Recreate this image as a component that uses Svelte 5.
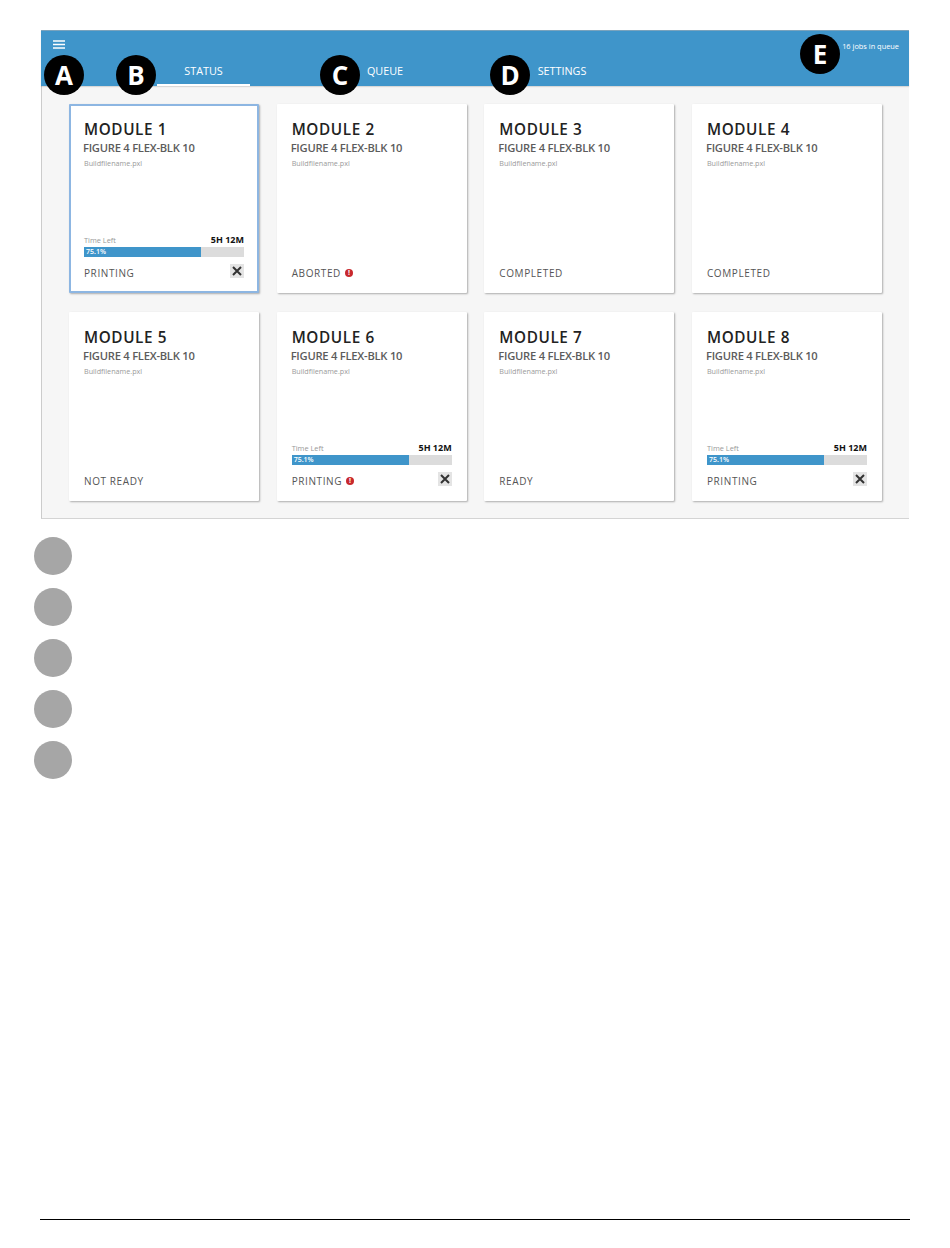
<script>
  const modules = [
    { n: 1, status: 'PRINTING', progress: true, active: true },
    { n: 2, status: 'ABORTED', alert: true },
    { n: 3, status: 'COMPLETED' },
    { n: 4, status: 'COMPLETED' },
    { n: 5, status: 'NOT READY' },
    { n: 6, status: 'PRINTING', progress: true, alert: true },
    { n: 7, status: 'READY' },
    { n: 8, status: 'PRINTING', progress: true }
  ];
  const tabs = ['STATUS', 'QUEUE', 'SETTINGS'];
  const markers = [
    { l: 'A', x: 64, y: 75 },
    { l: 'B', x: 136, y: 75 },
    { l: 'C', x: 340, y: 75 },
    { l: 'D', x: 510, y: 75 },
    { l: 'E', x: 820, y: 54 }
  ];
</script>

<div class="page">
  <section class="screen">
    <header class="bar">
      <div class="top">
        <svg class="menu" width="12" height="9" viewBox="0 0 12 9" aria-label="Menu">
          <path d="M0 1h12M0 4.5h12M0 8h12" stroke="#fff" stroke-width="1.7" fill="none" />
        </svg>
        <span class="jobs">16 jobs in queue</span>
      </div>
      <nav class="tabs">
        {#each tabs as t, i}
          <div class="tabcell"><span class="tab" class:on={i === 0}>{t}</span></div>
        {/each}
      </nav>
    </header>
    <div class="grid">
      {#each modules as m}
        <article class="card" class:active={m.active}>
          <h2>MODULE {m.n}</h2>
          <p class="sub">FIGURE 4 FLEX-BLK 10</p>
          <p class="file">Buildfilename.pxl</p>
          <div class="bottom">
            {#if m.progress}
              <div class="time"><span class="tl">Time Left</span><strong>5H 12M</strong></div>
              <div class="track"><div class="fill">75.1%</div></div>
            {/if}
            <div class="foot">
              <span class="status">{m.status}</span>
              {#if m.alert}<span class="err">!</span>{/if}
              {#if m.progress}
                <span class="x">
                  <svg width="10" height="10" viewBox="0 0 10 10"><path d="M1 1l8 8M9 1l-8 8" stroke="#333" stroke-width="2" fill="none" /></svg>
                </span>
              {/if}
            </div>
          </div>
        </article>
      {/each}
    </div>
  </section>

  <ul class="legend">
    {#each markers as m}<li></li>{/each}
  </ul>

  <div class="rule"></div>

  {#each markers as m}
    <span class="marker" style="left:{m.x - 20}px;top:{m.y - 20}px">{m.l}</span>
  {/each}
</div>

<style>
  :global(body) { margin: 0; background: #fff; }
  .page {
    position: relative;
    box-sizing: border-box;
    min-height: 1248px;
    padding: 30px 40px 28px 41px;
    display: flex;
    flex-direction: column;
    font-family: "Open Sans", "Liberation Sans", sans-serif;
  }
  .screen {
    box-sizing: border-box;
    width: 868px;
    height: 489px;
    background: #f6f6f6;
    border-left: 1px solid #ccc;
    border-bottom: 1px solid #d4d4d4;
  }
  .bar {
    box-sizing: border-box;
    height: 56px;
    margin-left: -1px;
    background: #3f95ca;
    border-top: 1px solid #7aa3bd;
    box-shadow: 0 1px 1px rgba(0, 0, 0, 0.12);
  }
  .top {
    display: flex;
    justify-content: space-between;
    align-items: flex-start;
    height: 27px;
    padding: 9px 10px 0 12px;
    box-sizing: border-box;
  }
  .menu { display: block; }
  .jobs { color: #fff; font-size: 7.4px; line-height: 12px; }
  .tabs {
    display: grid;
    grid-template-columns: 183px 180px 174px;
    padding-left: 71px;
    height: 28px;
  }
  .tabcell { display: flex; justify-content: center; }
  .tab {
    box-sizing: border-box;
    width: 93px;
    height: 28px;
    padding-top: 5px;
    text-align: center;
    color: #fff;
    font-size: 10.8px;
    line-height: 15px;
  }
  .tab.on { border-bottom: 2px solid #fff; }
  .grid {
    display: grid;
    grid-template-columns: repeat(4, 190px);
    grid-auto-rows: 189px;
    column-gap: 17.67px;
    row-gap: 19px;
    padding: 18px 0 0 27px;
  }
  .card {
    box-sizing: border-box;
    display: flex;
    flex-direction: column;
    padding: 16px 15px 12px;
    background: #fff;
    border-radius: 1px;
    box-shadow: 1px 1px 2px rgba(0, 0, 0, 0.3);
  }
  .card.active {
    padding: 14px 13px 10px;
    border: 2px solid #8db6e2;
  }
  h2 {
    margin: 0;
    color: #222;
    font-size: 15.3px;
    line-height: 18px;
    font-weight: 600;
    letter-spacing: 0.6px;
  }
  .sub {
    margin: 2px 0 0 -1px;
    color: #5c5c5c;
    font-size: 11.2px;
    line-height: 16px;
    font-weight: 600;
    letter-spacing: -0.25px;
  }
  .file {
    margin: 3px 0 0;
    color: #9a9a9a;
    font-size: 7.2px;
    line-height: 9px;
  }
  .bottom { margin-top: auto; }
  .time {
    display: flex;
    justify-content: space-between;
    align-items: flex-end;
    height: 12px;
  }
  .tl { color: #999; font-size: 7.4px; line-height: 10px; margin-bottom: 1px; }
  .time strong { color: #111; font-size: 9px; line-height: 12px; font-weight: 700; }
  .track {
    height: 10px;
    margin-top: 1px;
    background: #dcdcdc;
  }
  .fill {
    box-sizing: border-box;
    width: 73.3%;
    height: 100%;
    padding-left: 2px;
    background: #3f95ca;
    color: #fff;
    font-size: 7px;
    line-height: 10px;
    font-weight: 600;
  }
  .foot {
    position: relative;
    display: flex;
    align-items: center;
    gap: 4px;
    height: 16px;
    margin-top: 8px;
  }
  .status { color: #555; font-size: 10px; line-height: 16px; letter-spacing: 0.6px; }
  .err {
    width: 8px;
    height: 8px;
    border-radius: 50%;
    background: #c8282d;
    color: #fff;
    font-size: 7px;
    line-height: 8px;
    font-weight: 700;
    text-align: center;
  }
  .x {
    position: absolute;
    right: 0;
    top: -1px;
    width: 14px;
    height: 14px;
    background: #e4e4e4;
    display: flex;
    align-items: center;
    justify-content: center;
  }
  .legend {
    list-style: none;
    margin: 18px 0 0 -7px;
    padding: 0;
    display: flex;
    flex-direction: column;
    gap: 13px;
  }
  .legend li {
    width: 38px;
    height: 38px;
    border-radius: 50%;
    background: #a6a6a6;
  }
  .rule {
    margin-top: auto;
    width: 870px;
    margin-left: -1px;
    height: 1px;
    background: #000;
  }
  .marker {
    position: absolute;
    width: 40px;
    height: 40px;
    border-radius: 50%;
    background: #000;
    color: #fff;
    font-size: 26px;
    line-height: 40px;
    font-weight: 700;
    text-align: center;
  }
</style>
